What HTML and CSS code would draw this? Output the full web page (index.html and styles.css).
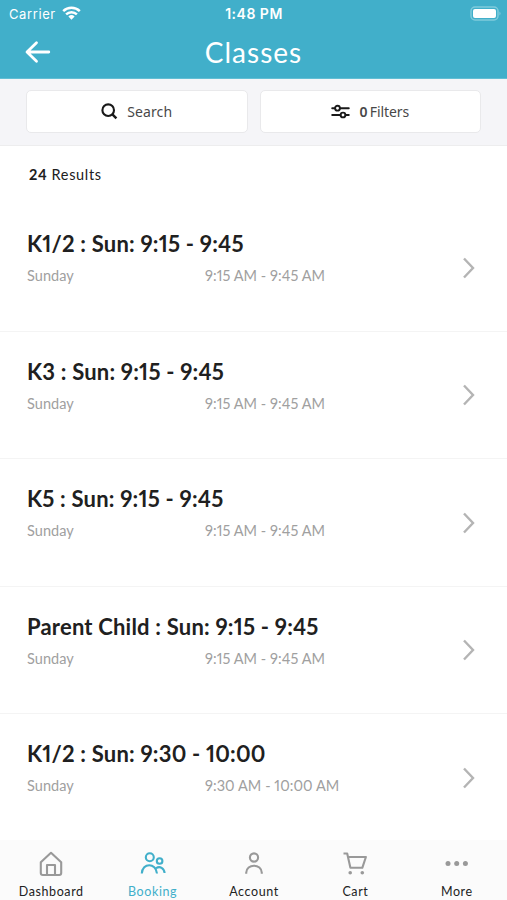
FILE: index.html
```html
<!DOCTYPE html>
<html lang="en">
<head>
    <meta charset="UTF-8">
    <meta name="viewport" content="width=device-width, initial-scale=1.0">
    <title>Classes</title>
    <link rel="stylesheet" href="styles.css">
</head>
<body>
    <div class="app">
        <header class="header">
            <!-- Status bar -->
            <div class="status-bar">
                <div class="carrier">
                    <span>Carrier</span>
                    <svg width="19" height="14" viewBox="0 0 19 14" fill="none" stroke="#fff" stroke-width="2.5">
                        <path d="M1.2 5.2a12 12 0 0 1 16.6 0"/>
                        <path d="M4.1 8.3a7.8 7.8 0 0 1 10.8 0"/>
                        <path d="M6.4 10.5a4.6 4.6 0 0 1 6.2 0L9.5 13.7z" fill="#fff" stroke="none"/>
                    </svg>
                </div>
                <span class="clock">1:48 PM</span>
                <svg class="battery" width="32" height="15" viewBox="0 0 32 15">
                    <rect x="1" y="1" width="27" height="13" rx="4" fill="none" stroke="#7fcbdc" stroke-width="1.5"/>
                    <rect x="3" y="3" width="23" height="9" rx="2" fill="#fff"/>
                    <path d="M29.5 5.5q2 2 0 4z" fill="#8dd0df"/>
                </svg>
            </div>
            <!-- Title bar -->
            <div class="title-bar">
                <svg class="back" width="26" height="24" viewBox="0 0 26 24" fill="none" stroke="#fff" stroke-width="2.8" stroke-linecap="round" stroke-linejoin="round">
                    <path d="M11.5 2.7L2 12l9.5 9.3M2.5 12h21.3"/>
                </svg>
                <h1>Classes</h1>
            </div>
        </header>

        <div class="toolbar">
            <button class="tool-btn">
                <svg width="17" height="17" viewBox="0 0 17 17" fill="none" stroke="#191919" stroke-width="2.1">
                    <circle cx="7.2" cy="7.2" r="5.8"/>
                    <path d="M11.4 11.4l4 4" stroke-width="2.4"/>
                </svg>
                <span class="search-label">Search</span>
            </button>
            <button class="tool-btn">
                <svg width="19" height="15" viewBox="0 0 19 15" fill="none" stroke="#191919" stroke-width="1.9" stroke-linecap="round">
                    <path d="M1.2 4.2h2.7M9 4.2h8.8M1.2 11h8.3M14.6 11h3.2"/>
                    <circle cx="6.5" cy="4.2" r="2.4"/>
                    <circle cx="12" cy="11" r="2.4"/>
                </svg>
                <span class="filter-label"><b>0</b> Filters</span>
            </button>
        </div>

        <main class="content">
            <p class="results"><b>24</b> Results</p>
            <ul class="class-list">
                <li class="class-item">
                    <h2>K1/2 : Sun: 9:15 - 9:45</h2>
                    <div class="meta"><span>Sunday</span><span>9:15 AM - 9:45 AM</span></div>
                    <svg class="chevron" width="14" height="22" viewBox="0 0 14 22"><path d="M2 1.5l9 9.5-9 9.5"/></svg>
                </li>
                <li class="class-item">
                    <h2>K3 : Sun: 9:15 - 9:45</h2>
                    <div class="meta"><span>Sunday</span><span>9:15 AM - 9:45 AM</span></div>
                    <svg class="chevron" width="14" height="22" viewBox="0 0 14 22"><path d="M2 1.5l9 9.5-9 9.5"/></svg>
                </li>
                <li class="class-item">
                    <h2>K5 : Sun: 9:15 - 9:45</h2>
                    <div class="meta"><span>Sunday</span><span>9:15 AM - 9:45 AM</span></div>
                    <svg class="chevron" width="14" height="22" viewBox="0 0 14 22"><path d="M2 1.5l9 9.5-9 9.5"/></svg>
                </li>
                <li class="class-item">
                    <h2>Parent Child : Sun: 9:15 - 9:45</h2>
                    <div class="meta"><span>Sunday</span><span>9:15 AM - 9:45 AM</span></div>
                    <svg class="chevron" width="14" height="22" viewBox="0 0 14 22"><path d="M2 1.5l9 9.5-9 9.5"/></svg>
                </li>
                <li class="class-item">
                    <h2>K1/2 : Sun: 9:30 - 10:00</h2>
                    <div class="meta"><span>Sunday</span><span>9:30 AM - 10:00 AM</span></div>
                    <svg class="chevron" width="14" height="22" viewBox="0 0 14 22"><path d="M2 1.5l9 9.5-9 9.5"/></svg>
                </li>
            </ul>
        </main>

        <!-- Bottom tabs -->
        <nav class="tabs">
            <a class="tab">
                <svg width="26" height="26" viewBox="0 0 26 26">
                    <path d="M2.8 11.2L13 1.8l10.2 9.4V22q0 2-2 2H4.8q-2 0-2-2z"/>
                    <path d="M9 24V14h8v10"/>
                </svg>
                <span>Dashboard</span>
            </a>
            <a class="tab active">
                <svg width="26" height="26" viewBox="0 0 26 26">
                    <circle cx="9.8" cy="6.3" r="4"/>
                    <circle cx="19.6" cy="10" r="2.8"/>
                    <path d="M1.8 22.5C2.3 11.5 16 11.5 17 22.5M16.2 17.2c3.6-2.6 8 0 8.4 4.8"/>
                </svg>
                <span>Booking</span>
            </a>
            <a class="tab">
                <svg width="26" height="26" viewBox="0 0 26 26">
                    <circle cx="13" cy="6.5" r="4.1"/>
                    <path d="M5.2 22.8v-1c0-9.5 15.6-9.5 15.6 0v1"/>
                </svg>
                <span>Account</span>
            </a>
            <a class="tab">
                <svg width="26" height="26" viewBox="0 0 26 26">
                    <path d="M1.5 2.5h3.7l3.2 14.3h11.9L23.9 6H6"/>
                    <circle class="dot" cx="8.2" cy="21.8" r="1.8"/>
                    <circle class="dot" cx="20.3" cy="21.8" r="1.8"/>
                </svg>
                <span>Cart</span>
            </a>
            <a class="tab">
                <svg width="26" height="26" viewBox="0 0 26 26">
                    <circle class="dot" cx="4" cy="12.5" r="2.5"/>
                    <circle class="dot" cx="12.7" cy="12.5" r="2.5"/>
                    <circle class="dot" cx="21.4" cy="12.5" r="2.5"/>
                </svg>
                <span>More</span>
            </a>
        </nav>
    </div>
</body>
</html>
```
FILE: styles.css
```css
* {
    margin: 0;
    padding: 0;
    box-sizing: border-box;
}
body {
    font-family: Lato, "Noto Sans", sans-serif;
    font-variant-numeric: proportional-nums;
    background-color: #fff;
    color: #202020;
}
.app {
    height: 900px;
    display: flex;
    flex-direction: column;
    overflow: hidden;
}
/* ===== Header ===== */
.header {
    height: 79px;
    flex-shrink: 0;
    background-color: #41afca;
    color: #fff;
    border-bottom: 1px solid #62bed4;
}
.status-bar {
    height: 27px;
    padding: 0 6px 0 9px;
    display: grid;
    grid-template-columns: 1fr auto 1fr;
    align-items: center;
    font-family: Inter, sans-serif;
    font-size: 13px;
}
.carrier {
    display: flex;
    align-items: center;
    gap: 6px;
    letter-spacing: 0.6px;
}
.carrier svg {
    margin-top: -2px;
}
.clock {
    margin-right: 2px;
    font-size: 14px;
    font-weight: 600;
    letter-spacing: 0.5px;
}
.battery {
    justify-self: end;
    margin-right: -1px;
}
.title-bar {
    height: 50px;
    padding: 0 25px;
    display: grid;
    grid-template-columns: 1fr auto 1fr;
    align-items: center;
}
.title-bar h1 {
    font-size: 28px;
    font-weight: 400;
    line-height: 50px;
    letter-spacing: 1px;
}
/* ===== Search and filters ===== */
.toolbar {
    height: 67px;
    flex-shrink: 0;
    padding: 11px 26px 12px;
    display: flex;
    gap: 12px;
    background-color: #f5f5f8;
    border-bottom: 1px solid #ededee;
}
.tool-btn {
    flex: 1;
    height: 43px;
    display: flex;
    justify-content: center;
    align-items: center;
    gap: 9px;
    border: 1px solid #e9e9eb;
    border-radius: 5px;
    background-color: #fff;
    color: #484848;
    font-family: "Noto Sans", sans-serif;
    font-size: 14px;
}
.search-label {
    letter-spacing: 0.1px;
}
.filter-label {
    letter-spacing: -0.1px;
    word-spacing: -1px;
}
.filter-label b {
    font-weight: 600;
}
/* ===== Class list ===== */
.content {
    flex: 1;
    overflow: hidden;
}
.results {
    height: 58px;
    padding-left: 29px;
    font-size: 14.5px;
    line-height: 58px;
    letter-spacing: 0.65px;
}
.class-list {
    list-style: none;
}
.class-item {
    height: 127.5px;
    padding: 26px 27px 0;
    position: relative;
    border-bottom: 1px solid #f4f4f4;
}
.class-item h2 {
    font-size: 22px;
    font-weight: 700;
    line-height: 28px;
    letter-spacing: 0.2px;
}
.meta {
    margin-top: 8px;
    display: grid;
    grid-template-columns: 178px auto;
    color: #a0a0a0;
    font-size: 14.5px;
    line-height: 20px;
    letter-spacing: 0.06px;
}
.chevron {
    position: absolute;
    top: 52.5px;
    right: 31px;
    fill: none;
    stroke: #b4b4b4;
    stroke-width: 2.4;
}
/* ===== Bottom tabs ===== */
.tabs {
    height: 60px;
    flex-shrink: 0;
    display: grid;
    grid-template-columns: repeat(5, 1fr);
    background-color: #fbfbfb;
}
.tab {
    padding: 11px 0 0 1px;
    display: flex;
    flex-direction: column;
    align-items: center;
    gap: 5px;
    color: #222;
    font-size: 12.5px;
    line-height: 19px;
    letter-spacing: 0.6px;
}
.tab svg {
    fill: none;
    stroke: #999;
    stroke-width: 2.1;
    stroke-linejoin: round;
}
.tab .dot {
    fill: #999;
    stroke: none;
}
.tab.active {
    color: #41afca;
}
.tab.active svg {
    stroke: #41afca;
}
```
